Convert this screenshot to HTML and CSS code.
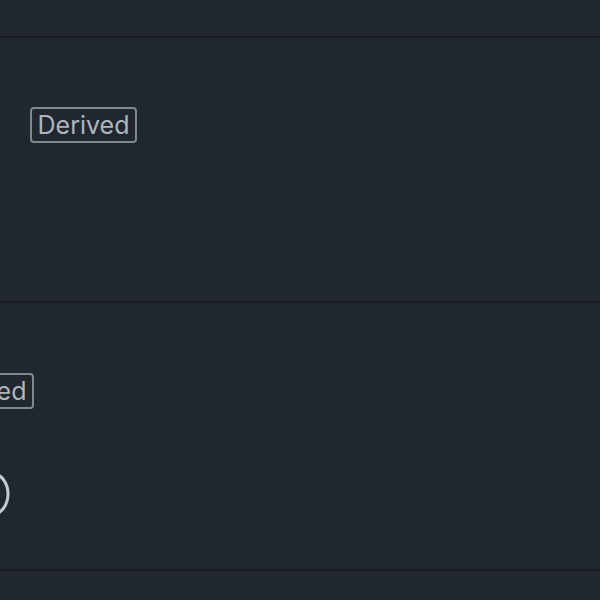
FILE: index.html
```html
<!DOCTYPE html>
<html>
<head>
<meta charset="utf-8">
<link rel="stylesheet" href="styles.css">
</head>
<body>
<div class="page">
  <div class="row row-top"></div>
  <div class="row row-one">
    <span class="badge">Derived</span>
  </div>
  <div class="row row-two">
    <span class="badge badge-cut">Derived</span>
    <svg class="ring" width="40" height="46" viewBox="0 0 40 46" aria-hidden="true">
      <ellipse cx="20" cy="23" rx="16" ry="20.5" fill="none" stroke="#c3cad2" stroke-width="3"/>
    </svg>
  </div>
  <div class="row row-last"></div>
</div>
</body>
</html>
```
FILE: styles.css
```css
html, body {
  margin: 0;
  padding: 0;
  background: #21272f;
}
.page {
  width: 600px;
  height: 600px;
  overflow: hidden;
  display: flex;
  flex-direction: column;
  font-family: Inter, "Liberation Sans", sans-serif;
}
.row {
  border-bottom: 2px solid #181c22;
  box-sizing: border-box;
}
.row-top {
  height: 38px;
}
.row-one {
  height: 265px;
  padding: 69px 0 0 30px;
}
.row-two {
  height: 268px;
  padding: 70px 0 0 0;
  display: flex;
  flex-direction: column;
  align-items: flex-start;
}
.row-last {
  flex: 1;
  border-bottom: none;
}
.badge {
  display: inline-flex;
  align-items: center;
  justify-content: center;
  box-sizing: border-box;
  width: 107px;
  height: 36px;
  border: 2px solid #7f8790;
  border-radius: 4px;
  color: #adb5be;
  font-size: 25px;
  font-weight: 400;
  letter-spacing: 0;
}
.badge-cut {
  margin-left: -73px;
}
.ring {
  margin-left: -28px;
  margin-top: 62px;
}
```
